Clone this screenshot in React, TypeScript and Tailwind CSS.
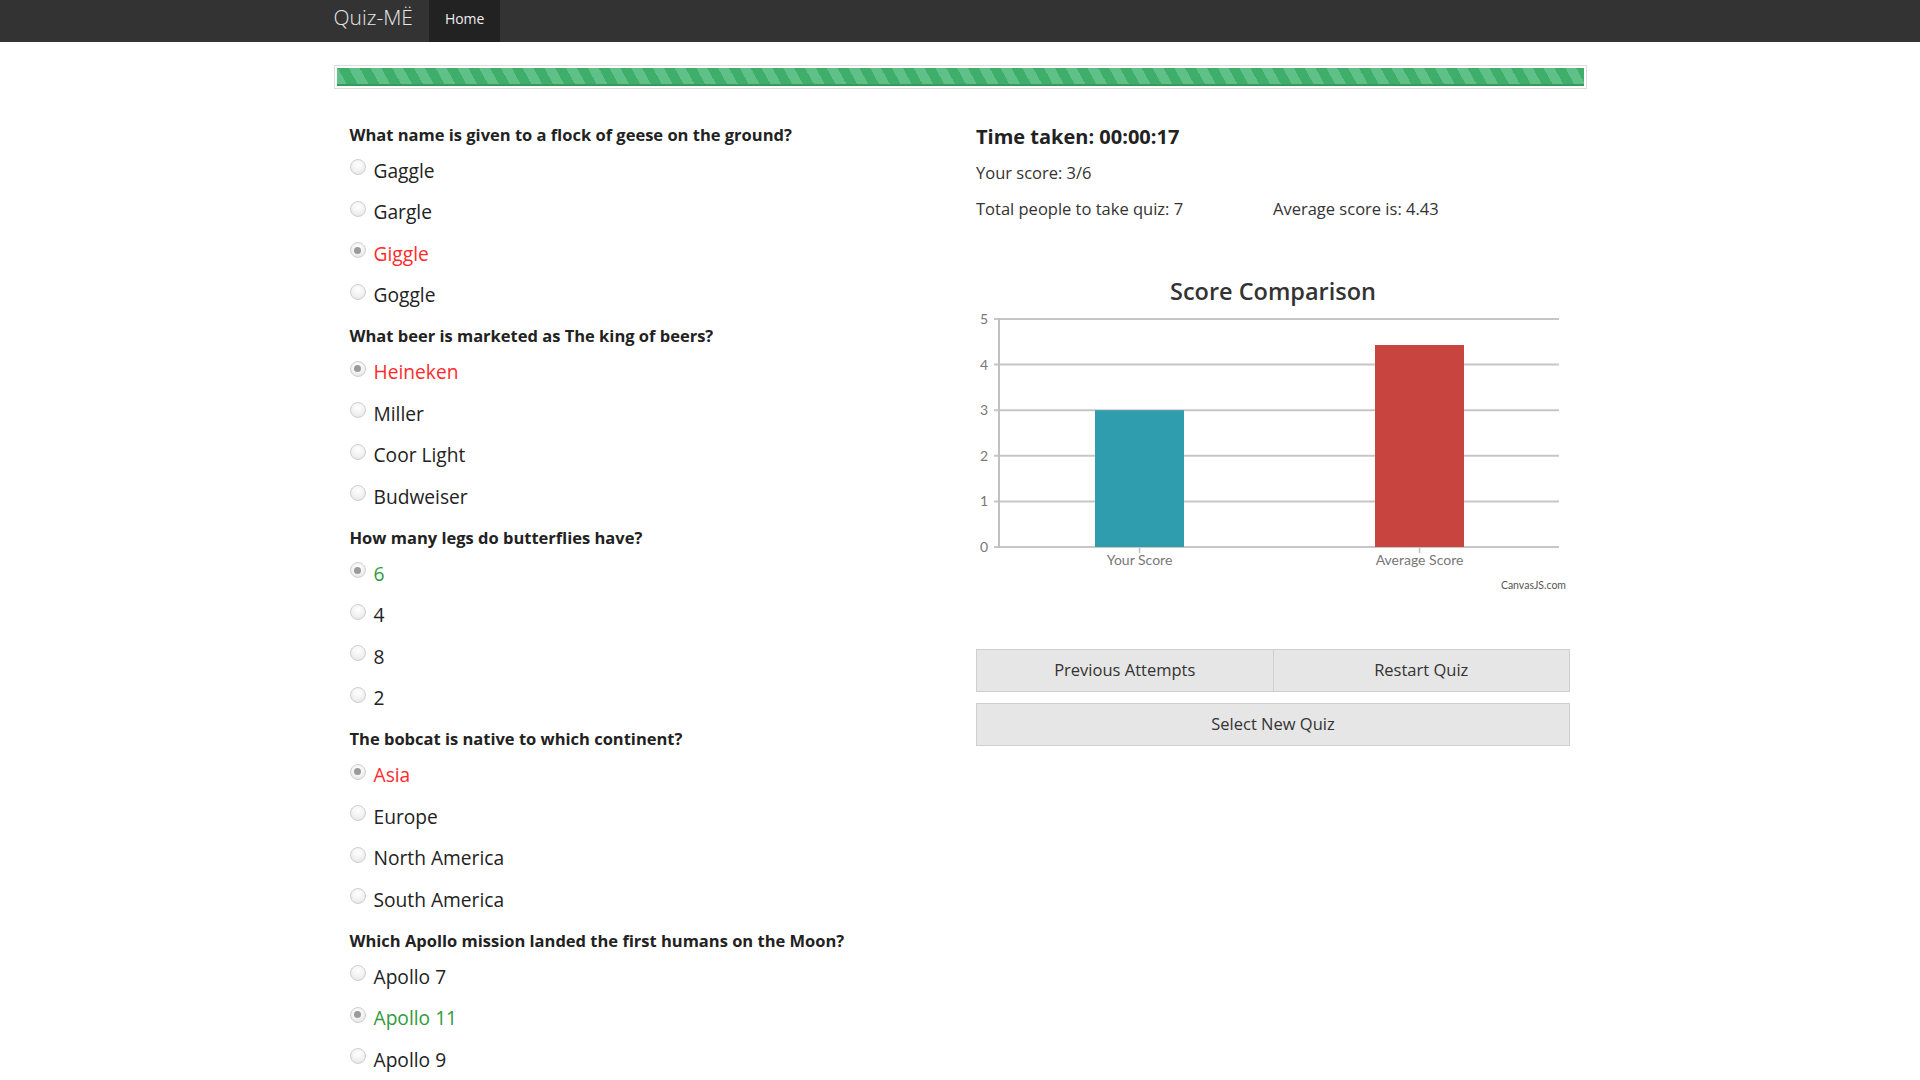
import React from "react";

type Opt = { label: string; state?: "wrong" | "right" };
type Q = { q: string; options: Opt[] };

const questions: Q[] = [
  {
    q: "What name is given to a flock of geese on the ground?",
    options: [{ label: "Gaggle" }, { label: "Gargle" }, { label: "Giggle", state: "wrong" }, { label: "Goggle" }],
  },
  {
    q: "What beer is marketed as The king of beers?",
    options: [{ label: "Heineken", state: "wrong" }, { label: "Miller" }, { label: "Coor Light" }, { label: "Budweiser" }],
  },
  {
    q: "How many legs do butterflies have?",
    options: [{ label: "6", state: "right" }, { label: "4" }, { label: "8" }, { label: "2" }],
  },
  {
    q: "The bobcat is native to which continent?",
    options: [{ label: "Asia", state: "wrong" }, { label: "Europe" }, { label: "North America" }, { label: "South America" }],
  },
  {
    q: "Which Apollo mission landed the first humans on the Moon?",
    options: [{ label: "Apollo 7" }, { label: "Apollo 11", state: "right" }, { label: "Apollo 9" }],
  },
];

function Radio({ checked }: { checked: boolean }) {
  return (
    <span className="mb-[8px] flex h-[16px] w-[16px] shrink-0 items-center justify-center rounded-full border border-[#cfcfcf] bg-[radial-gradient(circle_at_50%_35%,#ffffff_0%,#f1f1f1_55%,#dedede_100%)]">
      {checked && <span className="h-[7px] w-[7px] rounded-full bg-[#9a9a9a]" />}
    </span>
  );
}

function Question({ q }: { q: Q }) {
  return (
    <div className="mb-[6px]">
      <div className="flex h-[28.5px] items-center text-[16.5px] font-bold text-[#222]">{q.q}</div>
      <div className="mt-[1px]">
        {q.options.map((o) => (
          <div key={o.label} className="flex h-[41.5px] items-center gap-[8px]">
            <Radio checked={!!o.state} />
            <span
              className={
                "text-[19.2px] " +
                (o.state === "wrong" ? "text-[#ff2b2b]" : o.state === "right" ? "text-[#2f9a3a]" : "text-[#222]")
              }
            >
              {o.label}
            </span>
          </div>
        ))}
      </div>
    </div>
  );
}

function Chart() {
  const base = 239;
  const unit = 45.6;
  const ticks = [0, 1, 2, 3, 4, 5];
  const font = "Lato, 'Open Sans', sans-serif";
  return (
    <svg width="594" height="290" viewBox="0 0 594 290" className="block">
      {ticks.map((t) => (
        <g key={t}>
          <line x1="18" x2="583" y1={base - t * unit} y2={base - t * unit} stroke="#c6c6c6" strokeWidth="2" />
          <text x="12" y={base - t * unit + 5} textAnchor="end" fontSize="14" fill="#777" fontFamily={font}>
            {t}
          </text>
        </g>
      ))}
      <line x1="23" x2="23" y1="10" y2={base + 1} stroke="#c0c0c0" strokeWidth="2" />
      <rect x="119" y={base - 3 * unit} width="89" height={3 * unit} fill="#2f9dad" />
      <rect x="399" y={base - 4.43 * unit} width="89" height={4.43 * unit} fill="#c8443f" />
      <line x1="163.5" x2="163.5" y1={base} y2={base + 6} stroke="#bdbdbd" strokeWidth="1.5" />
      <line x1="443.5" x2="443.5" y1={base} y2={base + 6} stroke="#bdbdbd" strokeWidth="1.5" />
      <text x="163.5" y="257" textAnchor="middle" fontSize="14" fill="#777" fontFamily={font}>
        Your Score
      </text>
      <text x="443.5" y="257" textAnchor="middle" fontSize="14" fill="#777" fontFamily={font}>
        Average Score
      </text>
      <text x="590" y="281" textAnchor="end" fontSize="10.5" fill="#555" fontFamily={font}>
        CanvasJS.com
      </text>
    </svg>
  );
}

export default function App() {
  return (
    <div className="min-h-[1080px] bg-white font-['Open_Sans',sans-serif] text-[#333]">
      <nav className="h-[42px] bg-[#333]">
        <div className="mx-auto flex h-full w-[1253px]">
          <div className="flex h-[36px] items-center text-[21px] font-light text-[#e6e6e6]">Quiz-MË</div>
          <div className="ml-[16px] flex h-full items-center bg-[#222] px-[16px] pb-[6px] text-[14px] text-[#eee]">
            Home
          </div>
        </div>
      </nav>
      <div className="mx-auto w-[1253px]">
        <div className="mt-[23px] border border-[#dcdcdc] p-[2px]">
          <div className="h-[18px] bg-[repeating-linear-gradient(61deg,#5fc088_0px,#5fc088_9.5px,#40ae6b_9.5px,#40ae6b_19px)] shadow-[inset_0_-2px_0_#359c5b]" />
        </div>
        <div className="mt-[32px] grid grid-cols-2">
          <div className="pl-[16px] pr-[14px]">
            {questions.map((q) => (
              <Question key={q.q} q={q} />
            ))}
          </div>
          <div className="pl-[16px] pr-[14px]">
            <div className="w-[594px]">
              <div className="flex h-[31px] items-center text-[20px] font-bold text-[#222]">Time taken: 00:00:17</div>
              <div className="mt-[11px] flex h-[20px] items-center text-[16.5px] text-[#333]">Your score: 3/6</div>
              <div className="mt-[14px] grid h-[20px] grid-cols-2 items-center text-[16.5px] text-[#333]">
                <span>Total people to take quiz: 7</span>
                <span>Average score is: 4.43</span>
              </div>
              <div className="mt-[59px] flex h-[32px] items-center justify-center text-[23.5px] font-semibold text-[#333]">
                Score Comparison
              </div>
              <Chart />
              <div className="mt-[51px] flex">
                <button className="h-[43px] flex-1 border border-[#cfcfcf] bg-[#e6e6e6] text-[16.5px] text-[#333]">
                  Previous Attempts
                </button>
                <button className="-ml-px h-[43px] flex-1 border border-[#cfcfcf] bg-[#e6e6e6] text-[16.5px] text-[#333]">
                  Restart Quiz
                </button>
              </div>
              <button className="mt-[11px] h-[43px] w-full border border-[#cfcfcf] bg-[#e6e6e6] text-[16.5px] text-[#333]">
                Select New Quiz
              </button>
            </div>
          </div>
        </div>
      </div>
    </div>
  );
}
